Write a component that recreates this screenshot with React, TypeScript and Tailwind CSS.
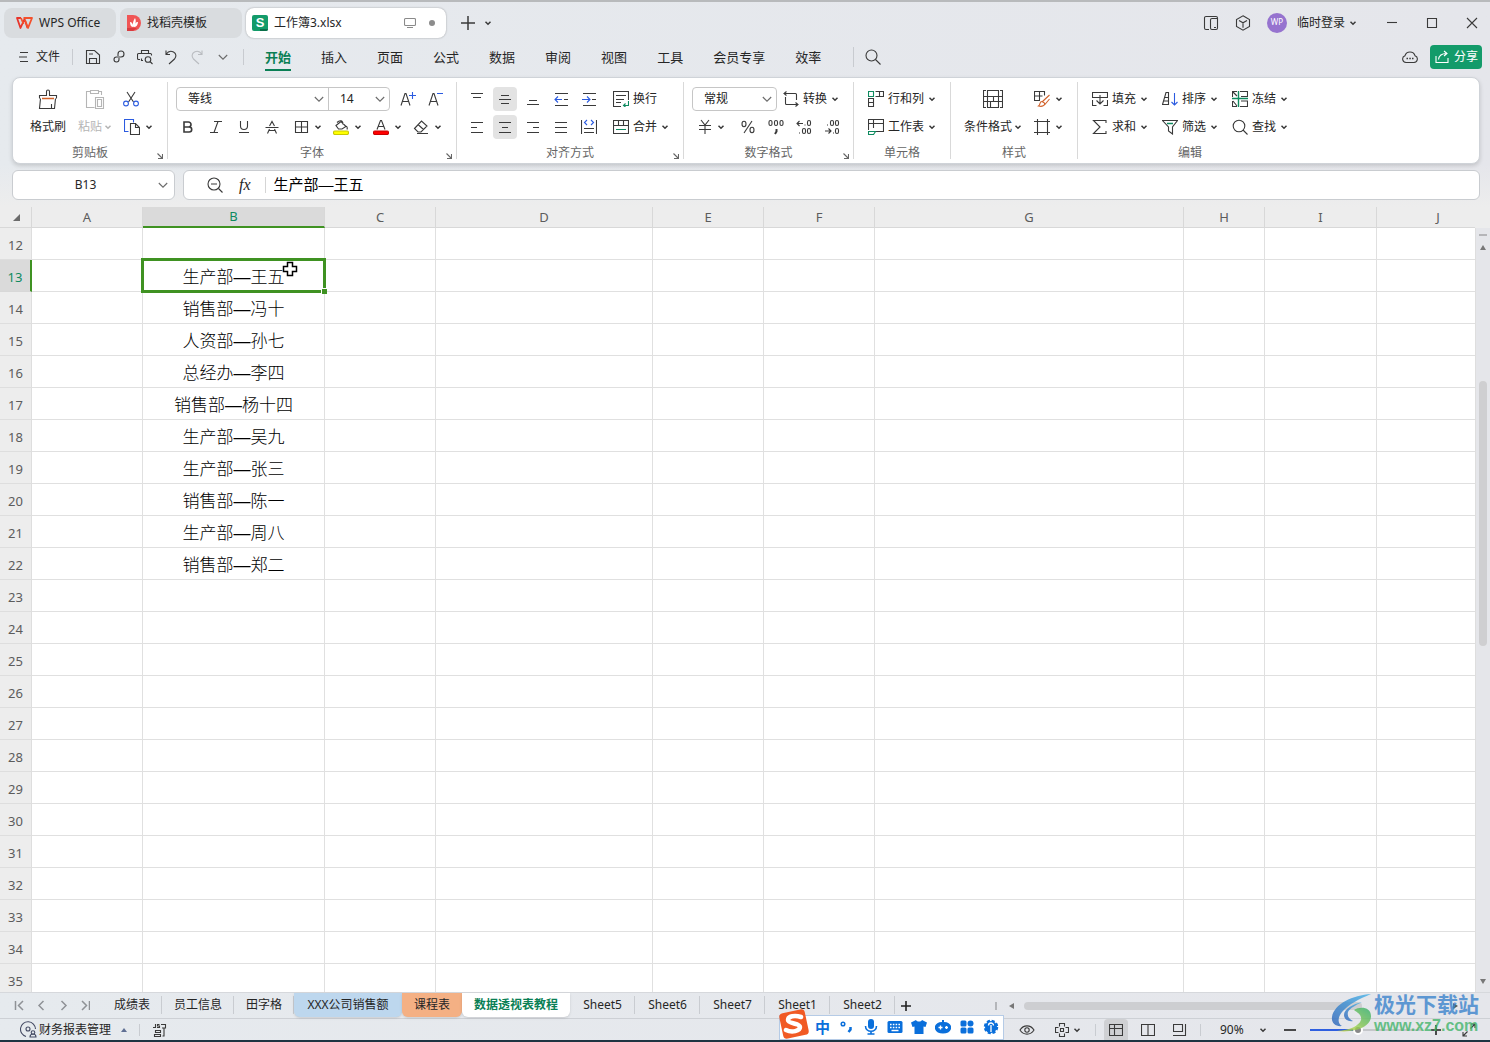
import React from "react";

type Kids = { children?: React.ReactNode };

const Ico = ({
  w = 16,
  h = 16,
  color = "#3a3a3a",
  children,
}: Kids & { w?: number; h?: number; color?: string }) => (
  <svg
    width={w}
    height={h}
    viewBox={`0 0 ${w} ${h}`}
    fill="none"
    stroke={color}
    strokeWidth="1.1"
    className="shrink-0"
    aria-hidden="true"
  >
    {children}
  </svg>
);

const BLUE = "#2b5be0";
const GREEN = "#0e8a5f";
const ORANGE = "#d2622a";

const Caret = ({ color = "#3a3a3a" }: { color?: string }) => (
  <Ico w={8} h={8} color={color}>
    <path d="M1.500 2.800 4 5.200 6.500 2.800" strokeWidth="1.500" />
  </Ico>
);

const Chevron = () => (
  <Ico w={10} h={8} color="#6b6b6b">
    <path d="M.8 2 5 6.200 9.200 2" />
  </Ico>
);

const Tool = ({ label, on, children }: Kids & { label: string; on?: boolean }) => (
  <button
    type="button"
    aria-label={label}
    className={`flex h-6 w-6 items-center justify-center rounded ${on ? "bg-[#e3e3e3]" : ""}`}
  >
    {children}
  </button>
);

const DropTool = ({ label, children }: Kids & { label: string }) => (
  <button type="button" aria-label={label} className="flex h-6 w-10 items-center gap-[5px] pl-[5px]">
    {children}
    <Caret />
  </button>
);

const TextTool = ({ text, caret = true, children }: Kids & { text: string; caret?: boolean }) => (
  <button type="button" className="flex h-6 items-center gap-1 whitespace-nowrap">
    {children}
    <span>{text}</span>
    {caret && <Caret />}
  </button>
);

const Group = ({
  name,
  width,
  launcher = true,
  last,
  children,
}: Kids & { name: string; width: string; launcher?: boolean; last?: boolean }) => (
  <section className={`relative flex shrink-0 flex-col pt-[5px] ${last ? "" : "border-r border-[#d9d9d9]"} ${width}`}>
    <div className="h-[52px]">{children}</div>
    <div className="mt-[5px] text-center leading-[18px] text-[#666]">{name}</div>
    {launcher && (
      <button type="button" aria-label={`${name}设置`} className="absolute right-1 bottom-0">
        <Ico w={6} h={6} color="#666">
          <path d="M.5.5 5 5M5.500 1v4.500H1" />
        </Ico>
      </button>
    )}
  </section>
);

const TitleBar = () => (
  <header className="flex h-10 shrink-0 items-center pt-px">
    <nav className="flex gap-1 pl-1">
      <a href="#home" className="flex h-[30px] w-28 items-center gap-[6px] rounded-lg bg-[#d9dcdf] pl-3">
        <svg width="17" height="12" viewBox="0 0 17 12" fill="none" strokeWidth="1.800" strokeLinejoin="round" aria-hidden="true">
          <path d="M5 1H1l3.500 10L8.500 2l3 9" stroke="#e8352b" />
          <path d="M5 1l2.500 6M7.500 1H16l-4 10L9 3" stroke="#f3502c" />
        </svg>
        WPS Office
      </a>
      <a href="#docer" className="flex h-[30px] w-[122px] items-center gap-[6px] rounded-lg bg-[#d9dcdf] pl-[7px]">
        <svg width="14" height="16" viewBox="0 0 14 16" aria-hidden="true">
          <path d="M0 0h6a8 8 0 0 1 0 16H0z" fill="#f05555" />
          <path d="M0 13h10l-4 3H0z" fill="#d93c40" />
          <path d="M7 12c-2-2-1-6 1-9 1 2 1 4 0 6 1-2 2-2 3-2 0 3-2 5-4 5ZM6.500 12C4 12 3 10 3 7c2 0 3 2 3.500 5Z" fill="#fff" />
        </svg>
        找稻壳模板
      </a>
      <a
        href="#book"
        className="flex h-[30px] w-[200px] items-center rounded-lg bg-white pr-[11px] pl-[6px] shadow-[0_0_2px_rgba(0,0,0,0.35)]"
      >
        <span className="relative mr-[6px] flex h-4 w-4 items-center justify-center rounded-[2px] bg-[#139b6a] font-['Liberation_Sans',sans-serif] text-[13px] leading-4 font-bold text-white">
          S
          <i className="absolute right-0 bottom-0 h-[2px] w-2 rounded-br-[2px] bg-[#0a6e48]" />
        </span>
        工作簿3.xlsx
        <span className="ml-auto flex items-center gap-[13px]">
          <Ico w={12} h={12} color="#8a8a8a">
            <path d="M1.500 1.500h9a1 1 0 0 1 1 1v5a1 1 0 0 1-1 1h-9a1 1 0 0 1-1-1v-5a1 1 0 0 1 1-1ZM3 10.500h6" />
          </Ico>
          <i className="h-[6px] w-[6px] rounded-full bg-[#8c8c8c]" />
        </span>
      </a>
    </nav>
    <button type="button" aria-label="新建" className="ml-[14px] p-px">
      <Ico w={14} h={14}>
        <path d="M7 0v14M0 7h14" strokeWidth="1.500" />
      </Ico>
    </button>
    <button type="button" aria-label="标签列表" className="ml-2">
      <Caret />
    </button>
    <div className="ml-auto flex items-center pr-3">
      <button type="button" aria-label="侧边栏" className="mr-4">
        <Ico>
          <path d="M6 14.500H3A1.500 1.500 0 0 1 1.500 13V3A1.500 1.500 0 0 1 3 1.500h10A1.500 1.500 0 0 1 14.500 3v10a1.500 1.500 0 0 1-1.500 1.500H9A1.500 1.500 0 0 1 7.500 13V5A1.500 1.500 0 0 1 9 3.500h5M11 12.500h2" />
        </Ico>
      </button>
      <button type="button" aria-label="应用" className="mr-4">
        <Ico>
          <path d="M8 .8 14.500 4.500v7L8 15.200 1.500 11.500v-7zM4 5.500l4 2.300 4-2.300M8 7.800v5" />
        </Ico>
      </button>
      <button type="button" className="flex items-center gap-1">
        <span className="mr-[6px] flex h-5 w-5 items-center justify-center rounded-full bg-[#9673cf] text-[8px] text-white">
          WP
        </span>
        临时登录
        <Caret />
      </button>
      <button type="button" aria-label="最小化" className="ml-[29px]">
        <Ico w={12} h={12}>
          <path d="M1 5.500h10" />
        </Ico>
      </button>
      <button type="button" aria-label="最大化" className="ml-7">
        <Ico w={12} h={12}>
          <path d="M1.500 1.500h9v9h-9z" />
        </Ico>
      </button>
      <button type="button" aria-label="关闭" className="ml-7">
        <Ico w={12} h={12}>
          <path d="m1 1 10 10M11 1 1 11" />
        </Ico>
      </button>
    </div>
  </header>
);

const menus = ["开始", "插入", "页面", "公式", "数据", "审阅", "视图", "工具", "会员专享", "效率"];

const MenuBar = () => (
  <div className="flex h-[35px] shrink-0 items-start">
    <div className="flex h-[30px] items-center pl-[19px]">
      <button type="button" className="flex items-center gap-2">
        <Ico w={9} h={12}>
          <path d="M1 1.500h8M0 6h8M1 10.500h8" />
        </Ico>
        文件
      </button>
      <i className="ml-3 h-4 w-px bg-[#c8cbd0]" />
      <div className="ml-3 flex gap-[10px]">
        <button type="button" aria-label="保存">
          <Ico>
            <path d="M1.500 1.500h8l5 4.500v8.500h-13zM4.500 14.500v-5h7v5M4 5h4" />
          </Ico>
        </button>
        <button type="button" aria-label="输出">
          <Ico>
            <path d="M7 7V5a3 3 0 1 1 3 3H5.500a2.500 2.500 0 1 0 2.500 2.500V9" />
          </Ico>
        </button>
        <button type="button" aria-label="打印预览">
          <Ico>
            <path d="M4.500 4.500v-3h7v3M6 11.500H4.500v-2M3 10.500H1.500A1 1 0 0 1 .5 9.500v-4a1 1 0 0 1 1-1h12a1 1 0 0 1 1 1v1M13 12.500l2.500 2.500" />
            <circle cx="11" cy="10.500" r="2.800" />
          </Ico>
        </button>
        <button type="button" aria-label="撤销">
          <Ico>
            <path d="M3 1.500v4h4M3.200 5.300C5 2.500 8 1.800 10.500 3c3 1.500 3 5 1 7L6 15" />
          </Ico>
        </button>
        <button type="button" aria-label="恢复">
          <Ico color="#b9bcc0">
            <path d="M13 1.500v4H9M12.800 5.300C11 2.500 8 1.800 5.500 3c-3 1.500-3 5-1 7l5.500 5" />
          </Ico>
        </button>
        <button type="button" aria-label="更多" className="px-[3px]">
          <Chevron />
        </button>
      </div>
      <i className="ml-3 h-4 w-px bg-[#c8cbd0]" />
    </div>
    <nav className="flex h-[30px] gap-[30px] pl-[21px] text-[13px] whitespace-nowrap">
      {menus.map((m, i) => (
        <a
          key={m}
          href={`#${m}`}
          className={`h-[29px] leading-[30px] ${i === 0 ? "border-b-2 border-[#0a7f55] font-bold text-[#0a7f55]" : ""}`}
        >
          {m}
        </a>
      ))}
    </nav>
    <div className="ml-8 flex h-[30px] items-center gap-[11px]">
      <i className="h-5 w-px bg-[#c8cbd0]" />
      <button type="button" aria-label="搜索">
        <Ico>
          <circle cx="6.500" cy="6.500" r="5.500" />
          <path d="m10.500 10.500 5 5" />
        </Ico>
      </button>
    </div>
    <div className="ml-auto flex h-[30px] items-center gap-3 pr-2">
      <button type="button" aria-label="云同步">
        <Ico>
          <path d="M4 13.500a3.500 3.500 0 0 1-1-6.800 5.200 5.200 0 0 1 10 0 3.500 3.500 0 0 1-1 6.800z" />
          <path d="M4.500 9.500h1.500M7.300 9.500h1.500M10 9.500h1.500" strokeWidth="1.500" />
        </Ico>
      </button>
      <button type="button" className="flex h-6 w-[52px] items-center gap-[5px] rounded bg-[#139b6a] pl-[5px] text-white">
        <Ico w={14} h={14} color="#fff">
          <path d="M1 6v6.500h12V8M3.500 9.500C4 5.500 7 3.500 11.500 3.500M9 1l3 2.500L9 6" />
        </Ico>
        分享
      </button>
    </div>
  </div>
);

const PickBox = ({ label, value, width }: { label: string; value: string; width: string }) => (
  <label className={`relative block h-6 ${width}`}>
    <select aria-label={label} className="h-full w-full appearance-none bg-transparent pl-[11px] text-[#222] outline-none">
      <option>{value}</option>
    </select>
    <span className="pointer-events-none absolute top-2 right-1">
      <Chevron />
    </span>
  </label>
);

const Ribbon = () => (
  <div className="mr-[10px] ml-3 flex h-[87px] shrink-0 overflow-hidden rounded-lg border border-[#cfd3d8] bg-white py-1 shadow-[0_2px_4px_rgba(0,0,0,0.15)]">
    <Group name="剪贴板" width="w-[155px]">
      <div className="flex">
        <button type="button" className="ml-4 flex w-[38px] flex-col items-center gap-3 pt-[2px]">
          <Ico w={20} h={20} color="#3a3a3a">
            <path d="M1.500 9.500v-3h7V2.500a1.500 1.500 0 0 1 3 0v4h7v3M2.500 9.500l-1 10h15l1-10M13.500 15v4" />
            <path d="M4 9.500h12" stroke={ORANGE} strokeWidth="1.500" />
          </Ico>
          <span className="leading-3 whitespace-nowrap">格式刷</span>
        </button>
        <button type="button" className="ml-2 flex w-10 flex-col items-center gap-3 pt-[2px] text-[#b5b5b5]">
          <Ico w={20} h={20} color="#b5b5b5">
            <path d="M5.500 2.500h-4v16h8M13.500 2.500h3V6M5.500 1.500h8v3h-8zM10.500 8.500h8v11h-8zM12.500 10.500h4v7h-4z" />
          </Ico>
          <span className="flex items-center gap-[2px] leading-3 whitespace-nowrap">
            粘贴
            <Caret color="#b5b5b5" />
          </span>
        </button>
        <div className="ml-1 flex flex-col gap-1">
          <Tool label="剪切">
            <Ico>
              <path d="M4 1l6.500 10M12 1 5.500 11" />
              <circle cx="3" cy="12.500" r="2.400" stroke={BLUE} />
              <circle cx="13" cy="12.500" r="2.400" stroke={BLUE} />
            </Ico>
          </Tool>
          <DropTool label="复制">
            <Ico>
              <path d="M4.500 12.500h-4v-12h9v3" stroke={BLUE} />
              <path d="M6.500 4.500h5l4 4v7h-9zM11.500 4.500v4h4" />
            </Ico>
          </DropTool>
        </div>
      </div>
    </Group>

    <Group name="字体" width="w-[289px]">
      <div className="flex items-center pl-2">
        <div className="flex h-6 items-center rounded border border-[#c6c6c6]">
          <div className="-my-px border-r border-[#c6c6c6]">
            <PickBox label="字体" value="等线" width="w-[151px]" />
          </div>
          <div className="-my-px">
            <PickBox label="字号" value="14" width="w-[60px]" />
          </div>
        </div>
        <div className="ml-[6px] flex gap-1">
          <Tool label="增大字号">
            <Ico>
              <path d="m1 14.500 4-12h1l4 12M2.500 10.500h6" />
              <path d="M12.500 1v7M9 4.500h7" stroke={BLUE} />
            </Ico>
          </Tool>
          <Tool label="减小字号">
            <Ico>
              <path d="m1 14.500 4-12h1l4 12M2.500 10.500h6" />
              <path d="M9 2.500h6" stroke={BLUE} />
            </Ico>
          </Tool>
        </div>
      </div>
      <div className="mt-1 flex pl-2">
        <div className="flex gap-1">
          <Tool label="加粗">
            <Ico w={12} h={14}>
              <path d="M2 2h4.500a2.500 2.500 0 0 1 0 5H2zM2 7h5.200a2.500 2.500 0 0 1 0 5H2z" strokeWidth="1.600" />
            </Ico>
          </Tool>
          <Tool label="倾斜">
            <Ico w={12} h={14}>
              <path d="M4 1.500h8M0 12.500h8M8 1.500l-4 11" />
            </Ico>
          </Tool>
          <Tool label="下划线">
            <Ico w={12} h={14}>
              <path d="M2.500 1v5a3.500 3.500 0 0 0 7 0V1M1 12.500h10" />
            </Ico>
          </Tool>
          <Tool label="删除线">
            <Ico w={14} h={14}>
              <path d="M4.500 6 7 1.500 9.500 6M.5 7.500h13M4.500 9 2.500 13.500M9.500 9l2 4.500M4 10.500h6" />
            </Ico>
          </Tool>
        </div>
        <div className="ml-1 flex">
          <DropTool label="边框">
            <Ico>
              <path d="M2.500 2.500h12v11h-12zM8.500 2.500v11M2.500 8h12" />
            </Ico>
          </DropTool>
          <DropTool label="填充颜色">
            <Ico>
              <path d="m3 6.500 5-4 5 5-4 2.500H5.500zM4 3.500c3-3 6-2 6 2M13.500 7c1 1.500 1 2.500.5 3.500" />
              <rect x=".5" y="12" width="15" height="3.500" rx="1.500" fill="#ffff00" stroke="#c8c800" />
            </Ico>
          </DropTool>
          <DropTool label="字体颜色">
            <Ico>
              <path d="m4 10.500 3.500-9h1l3.500 9M5.500 7.500h5" />
              <rect x=".5" y="12" width="15" height="3.500" rx="1.500" fill="#ff0000" stroke="#c80000" />
            </Ico>
          </DropTool>
          <DropTool label="清除">
            <Ico>
              <path d="m1.500 9.500 7-7.500 5.500 5-6 6H5zM5 5.500l5.500 5M4 14.500h11" />
            </Ico>
          </DropTool>
        </div>
      </div>
    </Group>

    <Group name="对齐方式" width="w-[227px]">
      <div className="flex pl-2">
        <div className="grid grid-cols-5 gap-1">
          <Tool label="顶端对齐">
            <Ico>
              <path d="M2 2.500h12M4 6.500h8" />
            </Ico>
          </Tool>
          <Tool label="垂直居中" on>
            <Ico>
              <path d="M4 4.500h8M2 8.500h12M4 12.500h8" />
            </Ico>
          </Tool>
          <Tool label="底端对齐">
            <Ico>
              <path d="M4 9.500h8M2 13.500h12" />
            </Ico>
          </Tool>
          <Tool label="减少缩进">
            <Ico>
              <path d="M2 2.500h13M2 14.500h13M11 8.500h4" />
              <path d="M9 8.500H2M5 5.500l-3 3 3 3" stroke={BLUE} />
            </Ico>
          </Tool>
          <Tool label="增加缩进">
            <Ico>
              <path d="M2 2.500h13M2 14.500h13M11 8.500h4" />
              <path d="M1 8.500h8M6 5.500l3 3-3 3" stroke={BLUE} />
            </Ico>
          </Tool>
          <Tool label="左对齐">
            <Ico>
              <path d="M2 3.500h12M2 8.500h6M2 13.500h12" />
            </Ico>
          </Tool>
          <Tool label="水平居中" on>
            <Ico>
              <path d="M2 3.500h12M5 8.500h6M2 13.500h12" />
            </Ico>
          </Tool>
          <Tool label="右对齐">
            <Ico>
              <path d="M2 3.500h12M8 8.500h6M2 13.500h12" />
            </Ico>
          </Tool>
          <Tool label="两端对齐">
            <Ico>
              <path d="M2 3.500h12M2 8.500h12M2 13.500h12" />
            </Ico>
          </Tool>
          <Tool label="分散对齐">
            <Ico>
              <path d="M.5 1v14M15.500 1v14M3 9.500h10M3 13.500h10" />
              <path d="M6 1 3.500 3.500 6 6M10 1l2.500 2.500L10 6" stroke={BLUE} />
            </Ico>
          </Tool>
        </div>
        <div className="ml-3 flex flex-col gap-1">
          <TextTool text="换行" caret={false}>
            <Ico>
              <path d="M8 15.500H.5V.500h15V9M3 4.500h10M3 8.500h8M3 11.500h5" />
              <path d="M15.500 10v4.500h-5M12.500 12.500l-2 2 2 1.500" stroke={GREEN} />
            </Ico>
          </TextTool>
          <TextTool text="合并">
            <Ico>
              <path d="M.5 1.500h15v13H.500zM.5 6.500h15M5.500 1.500v5M10.500 1.500v5" />
              <path d="M3 10.500h10" stroke={GREEN} />
            </Ico>
          </TextTool>
        </div>
      </div>
    </Group>

    <Group name="数字格式" width="w-[170px]">
      <div className="flex items-center gap-[6px] pl-2">
        <div className="flex h-6 items-center rounded border border-[#c6c6c6]">
          <PickBox label="数字格式" value="常规" width="w-[83px]" />
        </div>
        <TextTool text="转换">
          <Ico>
            <path d="M3.500.500l-2.500 2 2.500 2M1 2.500h11.500a1 1 0 0 1 1 1V9M12.500 11.500l2.500 2-2.500 2M15 13.500H3.500a1 1 0 0 1-1-1V6" />
          </Ico>
        </TextTool>
      </div>
      <div className="mt-1 flex pl-[14px]">
        <button type="button" aria-label="货币" className="flex h-6 w-[38px] items-center gap-[5px]">
          <Ico w={14}>
            <path d="m3 1 4 5 4-5M1 6.500h12M1 10.500h12M7 6v9" />
          </Ico>
          <Caret />
        </button>
        <div className="flex gap-1">
          <Tool label="百分比">
            <Ico>
              <path d="m12 2-8 12" />
              <ellipse cx="4" cy="5" rx="2" ry="2.700" />
              <ellipse cx="12" cy="11" rx="2" ry="2.700" />
            </Ico>
          </Tool>
          <Tool label="千位分隔">
            <Ico>
              <rect x="1" y="1.500" width="3" height="5" rx="1.500" />
              <rect x="6.500" y="1.500" width="3" height="5" rx="1.500" />
              <rect x="12" y="1.500" width="3" height="5" rx="1.500" />
              <path d="M8.500 10v2.500L7 15" strokeWidth="2" />
            </Ico>
          </Tool>
          <Tool label="增加小数位">
            <Ico>
              <path d="M7 4.500H1M3.500 2 1 4.500 3.500 7M8.500 6h1M3 14h1" />
              <rect x="11.500" y="1.500" width="3" height="5" rx="1.500" />
              <rect x="6.500" y="9.500" width="3" height="5" rx="1.500" />
              <rect x="11.500" y="9.500" width="3" height="5" rx="1.500" />
            </Ico>
          </Tool>
          <Tool label="减少小数位">
            <Ico>
              <path d="M1 12h6M4.500 9.500 7 12l-2.500 2.500M3 6h1M9 14h1" />
              <rect x="6.500" y="1.500" width="3" height="5" rx="1.500" />
              <rect x="11.500" y="1.500" width="3" height="5" rx="1.500" />
              <rect x="11.500" y="9.500" width="3" height="5" rx="1.500" />
            </Ico>
          </Tool>
        </div>
      </div>
    </Group>

    <Group name="单元格" width="w-[97px]" launcher={false}>
      <div className="flex flex-col gap-1 pl-[14px]">
        <TextTool text="行和列">
          <Ico>
            <path d="M.5.500h5v5h-5z" stroke={GREEN} />
            <path d="M7.500.500h8v5h-8M11.500.500v5M.5 7.500h5v8h-5zM.5 11.500h5" />
          </Ico>
        </TextTool>
        <TextTool text="工作表">
          <Ico>
            <path d="M.5 11V.500h15v12H8M.5 4.500h15M5.500.500V9" />
            <path d="M.5 12.500h7l-2 3h-5z" stroke={GREEN} />
          </Ico>
        </TextTool>
      </div>
    </Group>

    <Group name="样式" width="w-[127px]" launcher={false}>
      <div className="flex pl-[13px]">
        <button type="button" className="flex w-[58px] flex-col items-center gap-3 pt-[2px]">
          <Ico w={20} h={20}>
            <path d="M3 1.500H.500v17H3M17 1.500h2.500v17H17M4.500 1.500h11v17h-11zM4.500 7.500h11M4.500 12.500h11M10.500 7.500v5M7.500 12.500v6M.5 7.500h4M.5 12.500h4M15.500 7.500h4M15.500 12.500h4" />
          </Ico>
          <span className="flex items-center gap-[2px] leading-3 whitespace-nowrap">
            条件格式
            <Caret />
          </span>
        </button>
        <div className="ml-[7px] flex flex-col gap-1">
          <DropTool label="表格样式">
            <Ico>
              <path d="M6 9.500H.500V.500h10v4M.5 5h8M5.500.500v9" />
              <path d="M15.500 4 8 11M15.500 8l-5 6M8 10.500c-3 0-1 3-3.500 4.500 4 1 6.500-.5 6-3z" stroke={ORANGE} />
            </Ico>
          </DropTool>
          <DropTool label="单元格样式">
            <Ico>
              <path d="M3.500 0v16M13.500 0v16M0 2.500h16M0 13.500h16" />
            </Ico>
          </DropTool>
        </div>
      </div>
    </Group>

    <Group name="编辑" width="w-[224px]" launcher={false} last>
      <div className="grid grid-cols-[70px_70px_70px] gap-y-1 pl-[14px]">
        <TextTool text="填充">
          <Ico>
            <path d="M.5 6.500v-5h15v5zM.5 9v5.500h4M15.500 9v5.500h-4M8 4v9M4.500 9.500 8 13l3.500-3.500" />
          </Ico>
        </TextTool>
        <TextTool text="排序">
          <Ico>
            <path d="M.5 13.500 4 1.500h2.500v12zM2.500 6.500h4M1.500 10h5" />
            <path d="M12.500 2v12M9.500 11l3 3 3-3" stroke={BLUE} />
          </Ico>
        </TextTool>
        <TextTool text="冻结">
          <Ico>
            <path d="M.5 6V.500H5M1 1l4 4M.5 10v5.500H5M1 10l4 5M8 .500h7.500V5.500H9M9 10h6.500v5.500H8" />
            <path d="M6.500 0v16M0 7.500h16" stroke={GREEN} strokeWidth="1.400" />
          </Ico>
        </TextTool>
        <TextTool text="求和">
          <Ico>
            <path d="M14 4V1.500H1.500L8 8l-6.500 6.500H14V12" />
          </Ico>
        </TextTool>
        <TextTool text="筛选">
          <Ico>
            <path d="M.5 1.500h15L10.500 8v7L6.500 12V8z" />
            <path d="M5 4.500h6" stroke={GREEN} strokeWidth="1.500" />
          </Ico>
        </TextTool>
        <TextTool text="查找">
          <Ico>
            <circle cx="7" cy="7" r="5.800" />
            <path d="m11 11 4.500 4.500" />
          </Ico>
        </TextTool>
      </div>
    </Group>
  </div>
);

const FormulaBar = () => (
  <div className="flex h-[43px] shrink-0 gap-2 bg-linear-to-b from-transparent to-[#ededed] pt-[6px] pr-[10px] pl-3">
    <div className="flex h-[30px] w-[163px] shrink-0 items-center rounded-md border border-[#c9ccd0] bg-white pr-[6px]">
      <input aria-label="名称框" defaultValue="B13" className="w-full min-w-0 bg-transparent text-center outline-none" />
      <button type="button" aria-label="名称列表">
        <Chevron />
      </button>
    </div>
    <div className="flex h-[30px] flex-1 items-center rounded-md border border-[#c9ccd0] bg-white pl-[23px]">
      <button type="button" aria-label="缩小">
        <Ico>
          <circle cx="7" cy="7" r="6" />
          <path d="M4 7h6M11.500 11.500l4 4" />
        </Ico>
      </button>
      <button type="button" className="ml-4 font-['Liberation_Serif',serif] text-base leading-5 italic">
        fx
      </button>
      <i className="mr-2 ml-[14px] h-4 w-px bg-[#d5d5d5]" />
      <input
        aria-label="编辑栏"
        defaultValue="生产部—王五"
        className="flex-1 bg-transparent font-['Liberation_Sans','Noto_Sans_CJK_SC',sans-serif] text-[15px] text-black outline-none"
      />
    </div>
  </div>
);

const columns = [
  { name: "A", width: 111 },
  { name: "B", width: 182 },
  { name: "C", width: 111 },
  { name: "D", width: 217 },
  { name: "E", width: 111 },
  { name: "F", width: 111 },
  { name: "G", width: 309 },
  { name: "H", width: 81 },
  { name: "I", width: 112 },
  { name: "J", width: 123 },
];

const people: Record<number, string> = {
  13: "生产部—王五",
  14: "销售部—冯十",
  15: "人资部—孙七",
  16: "总经办—李四",
  17: "销售部—杨十四",
  18: "生产部—吴九",
  19: "生产部—张三",
  20: "销售部—陈一",
  21: "生产部—周八",
  22: "销售部—郑二",
};

const rows = Array.from({ length: 24 }, (_, i) => i + 12);

const Grid = () => (
  <main className="flex min-h-0 flex-1">
    <div className="min-w-0 flex-1 overflow-hidden bg-white">
      <table className="w-[1500px] table-fixed border-separate border-spacing-0">
        <colgroup>
          <col style={{ width: 32 }} />
          {columns.map((c) => (
            <col key={c.name} style={{ width: c.width }} />
          ))}
        </colgroup>
        <thead>
          <tr className="h-[21px] bg-[#ededed] text-[13px] leading-[19px] text-[#5c5c5c]">
            <th className="border-r border-b border-[#d8d8d8] p-0">
              <svg width="7" height="7" viewBox="0 0 7 7" className="ml-[13px]" aria-hidden="true">
                <path d="M7 0v7H0z" fill="#6b6b6b" />
              </svg>
            </th>
            {columns.map((c) => (
              <th
                key={c.name}
                scope="col"
                className={`border-r p-0 font-normal ${
                  c.name === "B"
                    ? "border-b-2 border-r-[#d8d8d8] border-b-[#3f9222] bg-[#dadada] text-[#0e8a5f]"
                    : "border-b border-[#d8d8d8]"
                }`}
              >
                {c.name}
              </th>
            ))}
          </tr>
        </thead>
        <tbody>
          {rows.map((r) => (
            <tr key={r} className="h-8">
              <th
                scope="row"
                className={`border-b p-0 pt-[2px] text-[13px] leading-5 font-normal ${
                  r === 13
                    ? "border-r-2 border-r-[#3f9222] border-b-[#d8d8d8] bg-[#dadada] text-[#0e8a5f]"
                    : "border-r border-[#dedede] bg-[#ededed] text-[#5c5c5c]"
                }`}
              >
                {r}
              </th>
              {columns.map((c) => {
                const active = c.name === "B" && r === 13;
                return (
                  <td
                    key={c.name}
                    className={`border-r border-b border-[#e0e0e0] p-0 pt-1 text-center font-['Liberation_Sans','Noto_Sans_CJK_SC',sans-serif] text-[17px] leading-6 font-light text-black ${
                      active ? "relative" : ""
                    }`}
                  >
                    {c.name === "B" && people[r]}
                    {active && (
                      <div className="pointer-events-none absolute -inset-[2px] border-3 border-[#3f9222]">
                        <i className="absolute -right-1 -bottom-1 h-[6px] w-[6px] border-t border-l border-white bg-[#3f9222]" />
                        <svg width="16" height="16" viewBox="0 0 16 16" className="absolute top-0 right-[25px]" aria-hidden="true">
                          <path
                            d="M5.500 1.500h5v4h4v5h-4v4h-5v-4h-4v-5h4z"
                            fill="#fff"
                            stroke="#000"
                            strokeWidth="1.500"
                          />
                        </svg>
                      </div>
                    )}
                  </td>
                );
              })}
            </tr>
          ))}
        </tbody>
      </table>
    </div>
    <div className="flex w-[15px] shrink-0 flex-col items-center bg-[#ededed] pt-[21px]">
      <div className="flex w-full flex-1 flex-col items-center border-l border-[#dedede] bg-[#e5e6ea] pt-[6px] pb-2">
        <i className="h-[2px] w-2 bg-[#b5b5b8]" />
        <svg width="6" height="5" viewBox="0 0 6 5" className="mt-[9px]" aria-hidden="true">
          <path d="M3 0 6 5H0z" fill="#777" />
        </svg>
        <div className="mt-[131px] h-[265px] w-2 rounded-full bg-[#cfcfd1]" />
        <svg width="6" height="5" viewBox="0 0 6 5" className="mt-auto" aria-hidden="true">
          <path d="M3 5 6 0H0z" fill="#777" />
        </svg>
      </div>
    </div>
  </main>
);

const sheets = [
  { name: "成绩表", look: "px-3" },
  { name: "员工信息", look: "px-3" },
  { name: "田字格", look: "px-3" },
  { name: "XXX公司销售额", look: "w-[108px] rounded-b-md bg-[#bdd7ee] shadow-sm" },
  { name: "课程表", look: "w-[60px] rounded-b-md bg-[#f4b084] shadow-sm" },
  { name: "数据透视表教程", look: "w-[108px] rounded-b-md bg-white font-bold text-[#0a7f55] shadow-sm" },
  { name: "Sheet5", look: "w-[65px]" },
  { name: "Sheet6", look: "w-[65px]" },
  { name: "Sheet7", look: "w-[65px]" },
  { name: "Sheet1", look: "w-[65px]" },
  { name: "Sheet2", look: "w-[65px]" },
];

const SheetTabs = () => (
  <div className="flex h-[27px] shrink-0 items-center border-t border-b border-t-[#d6d8dc] border-b-[#cdd0d5]">
    <div className="flex w-[102px] shrink-0 items-center gap-3 pl-[14px]">
      {[
        ["第一张", "M1.500 1v9M9 1 4.500 5.500 9 10"],
        ["上一张", "M7.500 1 3 5.500 7.500 10"],
        ["下一张", "M3.500 1 8 5.500 3.500 10"],
        ["最后一张", "M2 1l4.500 4.500L2 10M9.500 1v9"],
      ].map(([label, d]) => (
        <button key={label} type="button" aria-label={label}>
          <Ico w={10} h={11} color="#8f9296">
            <path d={d} strokeWidth="1.500" />
          </Ico>
        </button>
      ))}
    </div>
    <nav className="flex h-full">
      {sheets.map((s) => {
        const tinted = s.look.includes("bg-");
        return (
          <a
            key={s.name}
            href={`#${s.name}`}
            className={`relative flex h-6 shrink-0 items-center justify-center whitespace-nowrap ${s.look}`}
          >
            {s.name}
            {!tinted && <i className="absolute top-[3px] right-0 h-[18px] w-px bg-[#c9ccd1]" />}
          </a>
        );
      })}
    </nav>
    <button type="button" aria-label="新建工作表" className="ml-[6px]">
      <Ico w={10} h={10} color="#222">
        <path d="M5 0v10M0 5h10" strokeWidth="1.600" />
      </Ico>
    </button>
    <div className="ml-auto flex w-[495px] items-center">
      <i className="h-2 w-[2px] bg-[#b4b6ba]" />
      <svg width="5" height="6" viewBox="0 0 5 6" className="ml-3" aria-hidden="true">
        <path d="M5 0v6L0 3z" fill="#777" />
      </svg>
      <div className="ml-[10px] h-2 w-[338px] rounded-full bg-[#cdced1]" />
      <svg width="5" height="6" viewBox="0 0 5 6" className="ml-auto mr-8" aria-hidden="true">
        <path d="M0 0v6l5-3z" fill="#555" />
      </svg>
    </div>
  </div>
);

const StatusBar = () => (
  <footer className="flex h-[21px] shrink-0 items-center">
    <button type="button" className="ml-5 flex items-center gap-[2px] whitespace-nowrap">
      <Ico w={17} h={17} color="#444a63">
        <path d="M6 15.500A7.500 7.500 0 1 1 15.500 8M10 16c0-4 6-4 6 0z" />
        <circle cx="8" cy="8" r="2" />
        <circle cx="13" cy="11.500" r="1.800" />
      </Ico>
      财务报表管理
      <svg width="6" height="4" viewBox="0 0 6 4" className="ml-2" aria-hidden="true">
        <path d="M3 0 6 4H0z" fill="#5f6f93" />
      </svg>
    </button>
    <i className="ml-3 h-3 w-px bg-[#c9ccd1]" />
    <button type="button" aria-label="JS 宏" className="ml-[13px]">
      <Ico w={14} h={14}>
        <path d="M2.500 1v3.500H0M6.500 1.500H4.500V3h2v1.500H4M8 1.500h4.500V5H9M11 5v8H9.500M2.500 7.500h5v2h-5zM1.500 11.500h6v2h-6z" />
      </Ico>
    </button>
    <div className="ml-auto flex w-[471px] items-center">
      <button type="button" aria-label="护眼模式">
        <Ico>
          <path d="M1 8c3.500-5.500 10.500-5.500 14 0-3.500 5.500-10.500 5.500-14 0Z" />
          <circle cx="8" cy="8" r="2.200" />
        </Ico>
      </button>
      <button type="button" aria-label="阅读模式" className="ml-5 flex items-center gap-1">
        <Ico w={14} h={14}>
          <path d="M4.500 3.500v-3h5v3M4.500 10.500v3h5v-3M3.500 4.500h-3v5h3M10.500 4.500h3v5h-3M5.500 5.500h3v3h-3z" />
        </Ico>
        <Caret />
      </button>
      <i className="ml-[14px] h-3 w-px bg-[#c9ccd1]" />
      <div className="ml-2 flex gap-2">
        <button type="button" aria-label="普通视图" className="flex h-[21px] w-6 items-center justify-center rounded-t bg-[#cfd0d3]">
          <Ico w={14} h={12}>
            <path d="M.5.500h13v11H.500zM.5 4.500h13M5.500.500v11" />
          </Ico>
        </button>
        <button type="button" aria-label="分页预览" className="flex w-6 items-center justify-center">
          <Ico w={14} h={12}>
            <path d="M.5.500h13v11H.500zM7 .500v11" />
          </Ico>
        </button>
        <button type="button" aria-label="页面布局" className="flex w-6 items-center justify-center">
          <Ico w={14} h={12}>
            <path d="M.5.500h9v7h-9zM12.500 0v11.500H0" />
          </Ico>
        </button>
      </div>
      <i className="ml-2 h-3 w-px bg-[#c9ccd1]" />
      <button type="button" className="ml-[19px] flex items-center gap-[15px]">
        90%
        <Caret />
      </button>
      <button type="button" aria-label="缩小显示" className="ml-[17px]">
        <Ico w={12} h={12} color="#222">
          <path d="M0 6h12" strokeWidth="1.600" />
        </Ico>
      </button>
      <input
        type="range"
        aria-label="显示比例"
        min={0}
        max={100}
        defaultValue={42}
        className="ml-[14px] h-[10px] w-28 appearance-none bg-transparent bg-[linear-gradient(to_right,#2f5fe0_44px,#c4c6ca_44px)] bg-[length:100%_2px] bg-center bg-no-repeat [&::-webkit-slider-thumb]:h-[10px] [&::-webkit-slider-thumb]:w-[10px] [&::-webkit-slider-thumb]:appearance-none [&::-webkit-slider-thumb]:rounded-full [&::-webkit-slider-thumb]:border-2 [&::-webkit-slider-thumb]:border-white [&::-webkit-slider-thumb]:bg-[#888]"
      />
      <button type="button" aria-label="放大显示" className="ml-2">
        <Ico w={12} h={12} color="#222">
          <path d="M1 6h10M6 1v10" strokeWidth="1.600" />
        </Ico>
      </button>
      <button type="button" aria-label="全屏显示" className="ml-5">
        <Ico w={14} h={14}>
          <path d="M9 1h4v4M13 1 8.500 5.500M5 13H1V9M1 13l4.500-4.500" />
        </Ico>
      </button>
    </div>
  </footer>
);

const ImeBar = () => (
  <div className="absolute bottom-0 left-[779px] flex h-[25px] w-[225px] items-center justify-end gap-2 border border-[#b5cbe6] bg-white pr-1 pb-[2px]">
    <svg width="32" height="32" viewBox="0 0 32 32" className="absolute -top-2 -left-[2px]" aria-hidden="true">
      <rect x="3" y="3" width="26" height="26" rx="4" fill="#f15a24" transform="rotate(-12 16 16)" />
      <path
        d="M23 9C17 7 10 8 10 12s12 3 12 7-8 6-14 3"
        fill="none"
        stroke="#fff"
        strokeWidth="4.500"
        strokeLinecap="round"
      />
    </svg>
    <span className="w-4 text-[15px] leading-4 font-bold text-[#0a6fdb]">中</span>
    <Ico color="#0a6fdb">
      <circle cx="4" cy="5" r="1.800" strokeWidth="1.500" />
      <path d="M11.500 8v2.500L9.500 13" strokeWidth="2.500" />
    </Ico>
    <Ico color="#0a6fdb">
      <rect x="5" y="0" width="6" height="10" rx="3" fill="#0a6fdb" stroke="none" />
      <path d="M2.500 7c0 7 11 7 11 0M8 12v3M4.500 15h7" strokeWidth="1.600" />
    </Ico>
    <Ico color="#fff">
      <rect x=".5" y="2" width="15" height="12" rx="1.500" fill="#0a6fdb" stroke="none" />
      <path d="M3 5.500h10M3 8.500h10" strokeWidth="1.600" strokeDasharray="1.600 1.200" />
      <path d="M4.500 11.500h7" strokeWidth="1.500" />
    </Ico>
    <Ico>
      <path d="M5 1c1 2 5 2 6 0l5 2.500-1.500 4.500-2-.5V15h-9V7.500l-2 .5L0 3.500z" fill="#0a6fdb" stroke="none" />
    </Ico>
    <Ico color="#fff">
      <path d="M7 3V1h2v2c4 0 6 2 7 4v3c-1 3-4 4.500-8 4.500S1 13 0 10V7c1-2 3-4 7-4Z" fill="#0a6fdb" stroke="none" />
      <path d="M3.500 8.500h4M5.500 6.500v4M10 8.500h3M11.500 7v3" strokeWidth="1.300" />
    </Ico>
    <Ico>
      <g fill="#0a6fdb" stroke="none">
        <rect x="1.500" y="1.500" width="6" height="6" rx="1.500" />
        <circle cx="11.500" cy="4.500" r="3" />
        <rect x="1.500" y="8.500" width="6" height="6" rx="1.500" />
        <rect x="8.500" y="8.500" width="6" height="6" rx="1.500" />
      </g>
    </Ico>
    <Ico color="#fff">
      <circle cx="8" cy="8" r="6" fill="#0a6fdb" stroke="#0a6fdb" strokeWidth="2.500" strokeDasharray="3 1.700" />
      <path d="M8 6v7M5.500 6.500a2.500 2.500 0 1 1 5 0" strokeWidth="1.300" />
    </Ico>
  </div>
);

const SiteMark = () => (
  <div className="pointer-events-none absolute right-[10px] bottom-1 flex items-center gap-px opacity-80">
    <svg width="44" height="42" viewBox="0 0 44 42" aria-hidden="true">
      <defs>
        <linearGradient id="swoosh" x1="1" y1="0" x2="0" y2="1">
          <stop offset="0" stopColor="#45b4ea" />
          <stop offset="1" stopColor="#2b62b8" />
        </linearGradient>
        <linearGradient id="leaf" x1="0" y1="1" x2="1" y2="0">
          <stop offset="0" stopColor="#d3dc3c" />
          <stop offset="1" stopColor="#2fae6a" />
        </linearGradient>
      </defs>
      <path d="M42 1C24 2 5 11 3 24c-1 6 4 10 10 9-5-3-4-9 0-14C20 11 30 6 42 1Z" fill="url(#swoosh)" />
      <path d="M33 9C24 11 15 16 15 22c0 4 4 7 9 6-4-2-6-5-5-9 2-4 8-7 14-10Z" fill="url(#swoosh)" />
      <path d="M25 17c6-4 17-3 17 6 0 11-16 17-34 15 13-1 22-5 24-11 1-5-3-7-7-10Z" fill="url(#leaf)" />
    </svg>
    <div className="w-[106px] whitespace-nowrap">
      <div className="text-[21px] leading-6 font-bold text-[#3c84cd]">极光下载站</div>
      <div className="font-['Liberation_Sans',sans-serif] text-base leading-5 font-bold text-[#45b56c]">www.xz7.com</div>
    </div>
  </div>
);

const App = () => {
  return (
    <div
      lang="zh-CN"
      className="relative flex h-screen flex-col overflow-hidden border-t-2 border-t-[#b8babc] border-b-2 border-b-[#1e3442] bg-linear-to-r from-[#e6eaee] to-[#e5e6eb] font-['Noto_Sans','Noto_Sans_CJK_SC',sans-serif] text-xs text-[#262626]"
    >
      <TitleBar />
      <MenuBar />
      <Ribbon />
      <FormulaBar />
      <Grid />
      <SheetTabs />
      <StatusBar />
      <ImeBar />
      <SiteMark />
    </div>
  );
};

export default App;
